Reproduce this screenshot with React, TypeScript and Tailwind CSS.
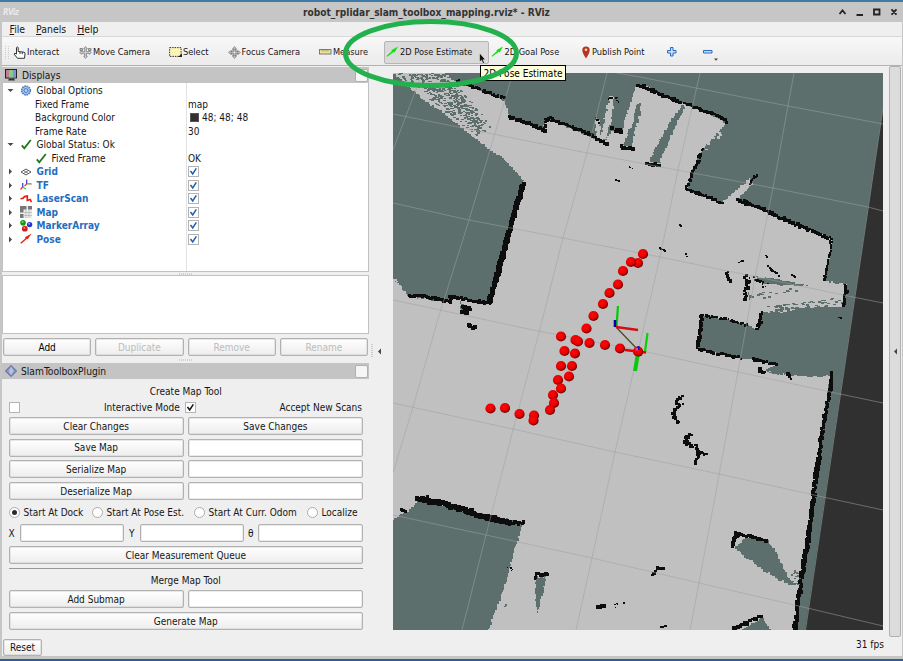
import React from 'react';

type P = [number, number];

/* Seeded generator so that the occupancy map is the same on every render */
function rng(seed: number) {
  let s = seed;
  return () => {
    s = (s * 1664525 + 1013904223) % 4294967296;
    return s / 4294967296;
  };
}

function pts(s: string): P[] {
  return s.split(' ').map((p) => p.split(',').map(Number) as P);
}

/* Blocky outline: steps along each edge in cell sized moves */
function jag(s: string, amp: number, seed: number): string {
  const r = rng(seed);
  const v = pts(s);
  let d = '';
  let first = true;
  v.forEach((a, i) => {
    const b = v[(i + 1) % v.length];
    const n = Math.max(1, Math.round(Math.hypot(b[0] - a[0], b[1] - a[1]) / 2.2));
    for (let k = 0; k < n; k++) {
      const x = (a[0] + ((b[0] - a[0]) * k) / n + (r() - 0.5) * amp).toFixed(1);
      const y = (a[1] + ((b[1] - a[1]) * k) / n + (r() - 0.5) * amp).toFixed(1);
      d += first ? `M${x} ${y}` : `H${x}V${y}`;
      first = false;
    }
  });
  return d + 'Z';
}

function wall(s: string, w: number, amp: number, seed: number): string {
  const r = rng(seed);
  const v = pts(s);
  let d = '';
  for (let i = 0; i < v.length - 1; i++) {
    const [a, b] = [v[i], v[i + 1]];
    const n = Math.max(1, Math.round(Math.hypot(b[0] - a[0], b[1] - a[1]) / 1.5));
    for (let k = 0; k <= n; k++) {
      const q = w * (0.8 + r() * 0.4);
      const x = a[0] + ((b[0] - a[0]) * k) / n + (r() - 0.5) * amp - q / 2;
      const y = a[1] + ((b[1] - a[1]) * k) / n + (r() - 0.5) * amp - q / 2;
      d += `M${x.toFixed(1)} ${y.toFixed(1)}h${q.toFixed(1)}v${q.toFixed(1)}h-${q.toFixed(1)}z`;
    }
  }
  return d;
}

/* Short dashes scattered in a quadrilateral a-b-c-d */
function scatter(a: P, b: P, c: P, d: P, n: number, seed: number, w = 2.4, fade = 1): string {
  const r = rng(seed);
  let out = '';
  for (let i = 0; i < n; i++) {
    const u = r();
    const t = Math.pow(r(), fade);
    const x = (a[0] * (1 - u) + b[0] * u) * (1 - t) + (d[0] * (1 - u) + c[0] * u) * t;
    const y = (a[1] * (1 - u) + b[1] * u) * (1 - t) + (d[1] * (1 - u) + c[1] * u) * t;
    out += `M${x.toFixed(1)} ${y.toFixed(1)}h${w}v1.3h-${w}z`;
  }
  return out;
}

const FREE =
  '390,70 423,100 443,113 467,133 490,150 510,165 523,182 490,303 450,297 450,302 410,297 393,278 388,274 388,521 393,519 410,509 418,500 523,523 513,557 500,600 489,630 487,636 797,636 797,630 800,587 807,537 815,487 822,437 830,376 812,377 790,375 775,372 760,372 777,364 753,360 740,357 698,349 702,315 725,319 747,325 758,331 762,312 783,312 807,307 843,307 847,284 825,281 832,238 737,199 753,183 750,179 722,203 686,189 693,167 702,150 725,123 720,118 683,103 643,85 637,85 625,120 622,132 612,131 605,142 593,138 553,120 546,119 543,131 510,117 505,100 473,87 457,82 445,73 443,70';

const WALLS: [string, number, number][] = [
  ['523,184 517,204 510,228 502,257 496,280 489,302', 4.6, 1.6],
  ['489,303 474,301 461,298 451,297 450,302 436,299 423,296 409,296', 3, 2],
  ['458,81 472,87 488,92 503,98', 2.6, 2.6],
  ['510,117 522,121 534,126 544,131 546,120 552,118', 3.2, 2.4],
  ['552,120 564,124 580,130 596,137', 2.8, 1.8],
  ['597,139 607,144', 3.2, 2],
  ['612,129 622,132', 3.6, 3],
  ['621,147 632,149', 3.6, 2],
  ['637,85 645,87 660,94 675,100 681,103', 3, 2],
  ['684,103 700,109 713,114 722,118 726,123', 2.8, 2.2],
  ['702,150 698,160 693,170 690,180 686,189', 2.6, 2.6],
  ['686,189 700,194 712,198 722,203', 2.8, 1.8],
  ['737,199 752,205 770,213 790,222 810,230 828,238', 3, 2.2],
  ['831,238 830,255 826,270 825,280', 2.2, 2],
  ['846,284 846,292 844,300 843,306', 2.8, 2.6],
  ['702,315 701,325 699,338 697,348', 3, 1.8],
  ['697,349 710,352 722,354 731,356 741,358', 2.6, 2.6],
  ['702,315 712,317 725,319 734,322 746,325', 2, 2.6],
  ['762,312 760,322 757,330', 2.8, 2.2],
  ['753,359 764,362 776,364', 2.8, 2],
  ['759,367 761,372 764,372', 2.8, 2],
  ['788,373 790,378', 3, 1.8],
  ['831,373 831,384 829,397 824,420 821,440 819,457', 3.2, 2],
  ['819,457 816,475 814,493 811,515 808,540 804,562 802,578', 3.9, 2.4],
  ['801,580 800,590 797,606 795,631', 3.4, 2.4],
  ['418,499 428,501 444,504 458,508 470,512 489,518 508,522', 4.8, 2.4],
  ['508,523 524,522', 3.4, 2.6],
  ['402,509 406,511', 3.6, 2],
  ['418,500 426,497', 3, 2.5],
  ['537,574 547,575', 3.6, 2],
  ['536,575 535,579', 2.4, 1],
  ['732,547 736,533 748,536 767,541', 3.2, 1.4],
  ['733,540 738,535', 4, 1.5],
  ['733,629 746,623 761,616', 3, 2],
  ['681,396 677,401 678,406 673,414 678,422', 2.8, 2.6],
  ['678,408 682,405', 2, 2],
  ['692,434 687,437 686,443 693,446', 3, 2.4],
  ['696,445 699,452 695,463', 2.8, 2],
  ['699,452 706,454', 2.4, 1.8],
  ['664,568 658,568 653,575', 3, 1.8],
  ['661,627 667,626', 2, 1.5],
  ['597,608 603,606', 3.4, 2.4],
  ['616,602 617,606', 1.4, 3],
  ['623,603 624,603', 1.4, 1],
  ['727,272 727,277 731,282', 2.6, 2],
  ['745,277 748,282 746,290 745,300', 3, 3],
  ['752,277 760,281 767,286', 1.8, 6],
  ['769,266 772,270 778,275', 2, 2.4],
  ['766,256 767,257', 1.6, 1],
  ['792,275 795,277', 1.8, 1],
  ['660,248 665,251', 1.8, 1],
  ['686,255 688,256', 1.8, 2],
  ['739,262 743,261', 1.6, 1],
  ['629,167 632,168', 1.6, 1],
  ['616,180 619,181', 1.8, 0.5],
  ['646,163 659,165', 3.4, 2],
  ['462,307 469,308 464,313 467,314', 3.4, 4],
  ['470,326 474,328', 4.2, 2.6],
  ['509,566 514,570', 1.5, 4],
  ['609,99 612,97', 2, 2],
  ['596,118 600,122', 1.8, 3],
  ['616,97 618,101', 1.6, 2],
  ['750,184 753,178 757,176', 2, 1.6],
  ['680,225 681,226', 1.4, 0.5],
  ['839,318 841,318', 1.8, 1],
];

const GRID = [
  '422,73 417,87 393,150',
  '513,73 490,150 469,220 438,319 413,407 393,473',
  '607,73 587,153 563,238 541,325 513,430 486,535 462,630',
  '700,73 678,170 660,257 643,330 615,452 592,558 576,630',
  '794,73 773,188 755,277 738,372 719,475 699,583 690,630',
  '617,73 640,77 788,106 883,124',
  '393,114 493,134 587,153 677,170 773,188 868,207 883,211',
  '393,203 469,220 563,238 660,257 757,277 853,297 883,303',
  '393,300 440,310 533,330 647,352 738,372 840,394 883,403',
  '393,403 513,429 615,452 719,474 823,497 883,510',
  '393,515 486,535 592,558 699,583 803,607 883,626',
];

const BALLS: P[] = [
  [643, 254], [638, 263], [631, 262], [623, 271], [618, 284.5], [609.5, 293], [603, 304], [593.5, 316], [586.5, 328.5],
  [561, 336.5], [575.5, 340], [578, 341.5], [589.5, 343], [605, 345], [620, 348.5], [638, 351.5],
  [564.5, 351], [575, 353.5], [561, 366], [572, 366], [569, 376.5], [558, 380], [561, 388.5], [553, 395], [554, 403], [550, 410],
  [490.5, 408.5], [505, 408], [519.5, 414], [534, 415.5], [533.5, 420.5],
];

function MapView() {
  return (
    <svg width="490" height="557" viewBox="393 73 490 557" className="block shrink-0">
      <defs>
        <radialGradient id="ball" cx="0.42" cy="0.38" r="0.6">
          <stop offset="0" stopColor="#ff0808" />
          <stop offset="0.65" stopColor="#e60000" />
          <stop offset="1" stopColor="#6a0000" />
        </radialGradient>
      </defs>
      <rect x="393" y="73" width="490" height="557" fill="#303030" />
      <path d="M393 73H883V107L805 630H393Z" fill="#5c6f6c" />
      <path d="M883.5 105L805.5 630" stroke="#7f8a88" strokeWidth="0.8" fill="none" />
      <g shapeRendering="crispEdges">
        <path d={jag(FREE, 1.8, 7)} fill="#c0c0c0" />
        <path d={jag('610,96 614,97 613,110 609,130 606,140 597,138 595,118 601,121 604,117', 2.4, 3)} fill="#c0c0c0" />
        <path d={jag('601,112 604,118 604,128 601,134 600,124', 2, 9)} fill="#5c6f6c" />
        <path d={jag('641,102 637,106 633,122 623,146 632,148 636,125 640,114', 2, 5)} fill="#5c6f6c" />
        <path d={jag('682,104 684,110 675,128 660,163 648,163 660,138 673,117', 2, 6)} fill="#5c6f6c" />
        <path d={jag('734,546 745,538 768,541 780,560 789,578 793,586 775,576 760,567 745,556', 2.4, 8)} fill="#5c6f6c" />
        <path d={jag('733,635 762,617 773,635', 1.4, 8)} fill="#5c6f6c" />
        <path d={jag('536,577 546,577 542,597 538,613 536,605', 1.6, 8)} fill="#5c6f6c" />
        <path d={jag('756,277 775,279 808,286 790,285 765,284', 1.6, 8)} fill="#5c6f6c" />
        <path d={jag('748,293 753,297 749,302', 1.6, 8)} fill="#5c6f6c" />
        <path d={jag('767,372 776,371 776,368 783,375', 1.6, 8)} fill="#5c6f6c" />
        <path d={jag('460,302 467,307 466,312 461,309', 1.6, 8)} fill="#5c6f6c" />
        <path d={scatter([396, 73], [444, 73], [482, 124], [476, 136], 400, 11, 2.4, 1.3)} fill="#5c6f6c" />
        <path d={scatter([440, 80], [456, 84], [492, 128], [482, 134], 60, 13, 2)} fill="#5c6f6c" />
        <path d={scatter([765, 306], [843, 296], [843, 308], [770, 312], 75, 17, 3)} fill="#5c6f6c" />
        <path d={scatter([755, 293], [790, 288], [800, 290], [758, 299], 16, 18, 3)} fill="#5c6f6c" />
        <path d={scatter([393, 276], [399, 285], [407, 296], [393, 285], 22, 21, 2)} fill="#c0c0c0" />
        <path d={scatter([790, 568], [799, 573], [801, 584], [791, 585], 26, 29, 2)} fill="#5c6f6c" />
        <path d={scatter([705, 128], [726, 126], [712, 144], [702, 150], 14, 30, 3)} fill="#c0c0c0" />
        <path d={scatter([504, 604], [506, 604], [507, 606], [504, 606], 3, 31, 2)} fill="#5c6f6c" />
        {WALLS.map(([s, w, a], i) => (
          <path key={i} d={wall(s, w, a, 40 + i)} fill="#0d0d0d" />
        ))}
      </g>
      <g fill="none" stroke="#a0a0a0" strokeOpacity="0.6" strokeWidth="0.9">
        {GRID.map((g) => (
          <polyline key={g} points={g} />
        ))}
      </g>
      <path d="M616 327L639 351" stroke="#4a4420" strokeWidth="1.2" />
      <path d="M616.5 326L618 306" stroke="#0c0" strokeWidth="2.2" />
      <path d="M615 327V320" stroke="#00a" strokeWidth="2.6" />
      <path d="M616 327L638 330" stroke="#d01010" strokeWidth="2.4" />
      <path d="M645 352L647.5 333" stroke="#0ad00a" strokeWidth="2.2" />
      {BALLS.map(([x, y], i) => (
        <circle key={i} cx={x} cy={y} r="5.1" fill="url(#ball)" />
      ))}
      <path d="M625 350L646 352.5" stroke="#f00000" strokeWidth="2.4" />
      <path d="M637.5 356L635 371" stroke="#0ac80a" strokeWidth="4" />
      <circle cx="638.5" cy="352" r="4.6" fill="url(#ball)" />
      <path d="M638.5 350V346" stroke="#1010c0" strokeWidth="2" />
      <rect x="635.5" y="348" width="2.5" height="2.5" fill="#d050a0" />
    </svg>
  );
}

function ToolButton({ w, label, icon, pad = '' }: { w: string; label: string; icon: React.ReactNode; pad?: string }) {
  return (
    <div className={`flex h-6 shrink-0 items-center ${w} ${pad}`}>
      {icon}
      <span>{label}</span>
    </div>
  );
}

function Arrow({ c }: { c: string }) {
  return (
    <svg width="13" height="12" viewBox="0 0 13 12" className="shrink-0">
      <path d="M0.500 10L6 5L5.300 4.200L12 0.500L8.600 6.600L7.600 6L1.200 10.700Z" fill={c} />
    </svg>
  );
}

function MoveIcon({ focus = false }: { focus?: boolean }) {
  return (
    <svg width="13" height="13" viewBox="0 0 13 13" className="shrink-0" fill="#ddd" stroke="#777" strokeWidth="0.8">
      <path d="M6.500 0.600L8.300 2.800H7.300V5.700H10.200V4.700L12.400 6.500L10.200 8.300V7.300H7.300V10.200H8.300L6.500 12.400L4.700 10.200H5.700V7.300H2.800V8.300L0.600 6.500L2.800 4.700V5.700H5.700V2.800H4.700Z" />
      {focus ? <circle cx="6.500" cy="6.500" r="3.300" fill="none" /> : <path d="M1 2.500h2.500v2H1zM9.500 2.500h2.500v2H9.500z" fill="#bbb" />}
    </svg>
  );
}

function Caret({ open }: { open?: boolean }) {
  return (
    <svg width="7" height="7" viewBox="0 0 7 7" className="shrink-0">
      <path d={open ? 'M0.500 2H6.500L3.500 5Z' : 'M2 0.500L5 3.500L2 6.500Z'} fill="#4a4a4a" />
    </svg>
  );
}

function CheckMark() {
  return (
    <svg width="11" height="11" viewBox="0 0 11 11" className="shrink-0">
      <path d="M0.800 6.300L3.300 9.300L9.800 1" stroke="#1a7a1a" strokeWidth="1.800" fill="none" />
    </svg>
  );
}

function Box({ checked, c = '#111' }: { checked?: boolean; c?: string }) {
  return (
    <span className="flex size-[11px] shrink-0 items-center justify-center border border-[#b4b4b4] bg-white">
      {checked && (
        <svg width="9" height="9" viewBox="0 0 9 9">
          <path d="M1.500 4L3.700 7L7.300 1.300" stroke={c} strokeWidth="1.500" fill="none" />
        </svg>
      )}
    </span>
  );
}

const icons: Record<string, React.ReactNode> = {
  gear: (
    <svg width="12" height="12" viewBox="0 0 12 12">
      <circle cx="6" cy="5.500" r="4.400" fill="#a9c6ec" stroke="#4a7dc0" strokeWidth="1.500" strokeDasharray="1.700 0.600" />
      <path d="M6 2v7M2.500 5.500h7M3.500 3l5 5M8.500 3l-5 5" stroke="#6f9bd6" strokeWidth="0.600" />
      <circle cx="6" cy="5.500" r="1.800" fill="#c4d8f2" stroke="#3a6fb5" strokeWidth="0.800" />
    </svg>
  ),
  Grid: (
    <svg width="12" height="12" viewBox="0 0 12 12" fill="none" stroke="#4a4a4a" strokeWidth="0.900">
      <path d="M1 6L6 3L11 6L6 9Z" />
      <path d="M3.500 4.500L8.500 7.500M8.500 4.500L3.500 7.500" strokeWidth="0.700" />
    </svg>
  ),
  TF: (
    <svg width="12" height="12" viewBox="0 0 12 12" fill="none" strokeWidth="1.200">
      <path d="M2.700 8V4M6.700 5V0.500" stroke="#33d" />
      <path d="M2.700 8L6 10M6.700 5L11.500 4.600" stroke="#2d2" />
      <path d="M2.700 8L0.500 10.500M6.700 5L4.500 7" stroke="#e33" />
      <path d="M7.500 4.500L11.500 5.500" stroke="#e66" strokeWidth="0.700" />
    </svg>
  ),
  LaserScan: (
    <svg width="12" height="12" viewBox="0 0 12 12" fill="none" stroke="#ee1414" strokeWidth="1.600">
      <path d="M0.500 5.800L3 5.300L4.500 3.600L7.300 3V7.500L10.300 6.500L11.500 9.300" />
    </svg>
  ),
  Map: (
    <svg width="12" height="12" viewBox="0 0 12 12">
      <rect width="12" height="12" fill="#ececec" />
      <path d="M0 0H6.500V3.500H3.500V6.500H0ZM8 0h4v3.500H8zM0 8h3.500v4H0z" fill="#777" />
      <path d="M6 4v8M9 4v8M4 6.500h8M4 9.500h8" stroke="#aaa" strokeWidth="0.600" />
    </svg>
  ),
  MarkerArray: (
    <svg width="13" height="12" viewBox="0 0 13 12">
      <circle cx="3" cy="2.800" r="2.800" fill="#149614" />
      <circle cx="9.600" cy="4.600" r="2.700" fill="#2335c8" />
      <circle cx="4.800" cy="8.700" r="2.900" fill="#c82020" />
      <circle cx="2.600" cy="2" r="1" fill="#6fe06f" />
      <circle cx="9.200" cy="3.800" r="1" fill="#99f" />
      <circle cx="4.400" cy="7.800" r="1" fill="#f88" />
    </svg>
  ),
  Pose: (
    <svg width="12" height="12" viewBox="0 0 12 12">
      <path d="M0.300 9.800L5.500 5.300L5 4.300L11.600 0.600L7.800 6.200L7 5.800L1.200 10.800Z" fill="#e8200f" />
    </svg>
  ),
};

function OptionRow({ label, children }: { label: string; children: React.ReactNode }) {
  return (
    <div className="flex h-[13.5px] items-center">
      <span className="w-[153px]">{label}</span>
      <span className="flex items-center">{children}</span>
    </div>
  );
}

function DisplayRow({ name }: { name: string }) {
  return (
    <div className="flex h-[13.5px] items-center">
      <span className="w-[13px]">
        <Caret />
      </span>
      <span className="flex w-[16.5px] items-center">{icons[name]}</span>
      <span className="w-[151.5px] font-bold text-[#1f6ebf]">{name}</span>
      <Box checked c="#1f5fae" />
    </div>
  );
}

const btn =
  'flex items-center justify-center rounded-[2px] border border-[#b2b2b2] bg-gradient-to-b from-[#ffffff] to-[#ededed] shadow-[inset_0_0_0_0.5px_#d0d0d0]';
const field = 'rounded-[2px] border border-[#b2b2b2] bg-white shadow-[inset_0_0_0_0.5px_#d8d8d8]';

function Dots() {
  return <div className="h-[2px] w-[13px] border-y border-dotted border-[#d0d0d0]" />;
}

function Radio({ label, on, w }: { label: string; on?: boolean; w: string }) {
  return (
    <div className={`flex items-center gap-[4px] ${w}`}>
      <span className="flex size-[11px] shrink-0 items-center justify-center rounded-full border border-[#adadad] bg-white">
        {on && <span className="size-[5px] rounded-full bg-[#2b2b2b]" />}
      </span>
      <span>{label}</span>
    </div>
  );
}

export default function App() {
  return (
    <div className="relative flex h-[661px] w-[903px] flex-col overflow-hidden bg-[#c6c6c6] font-['DejaVu_Sans_Condensed','DejaVu_Sans',sans-serif] text-[10px] leading-[13px] whitespace-nowrap text-[#161616] [font-stretch:condensed]">
      <div className="h-[2px] shrink-0 bg-[#3d7ba5]" />
      <header className="flex h-5 shrink-0 items-center">
        <span className="w-[302px] pl-[3px] text-[8px] font-bold tracking-[-0.6px] text-[#e9e9e9] italic">RViz</span>
        <h1 className="w-[536px] pl-px text-[10.1px] font-bold text-[#333]">robot_rplidar_slam_toolbox_mapping.rviz* - RViz</h1>
        <svg width="62" height="10" viewBox="0 0 62 10" fill="none" stroke="#222" strokeWidth="1.800">
          <path d="M1.500 7L4.500 3.500L7.500 7M18.500 8H25M36 2.500H41.500V7.500H36ZM53.500 2.300L58.500 7.700M58.500 2.300L53.500 7.700" />
        </svg>
      </header>

      <div className="mx-[2px] mr-px flex min-h-0 grow flex-col bg-[#efefef]">
        <nav className="flex h-[14px] shrink-0 items-center gap-[11px] pl-[7.5px] text-[10.4px]">
          <span><u>F</u>ile</span>
          <span><u>P</u>anels</span>
          <span><u>H</u>elp</span>
        </nav>
        <div className="flex h-[30px] shrink-0 items-center border-y border-t-[#d8d8d8] border-b-[#b2b2b2] bg-gradient-to-b from-[#f8f8f8] to-[#ebebeb] pt-[2px] pl-[3px] font-['DejaVu_Sans',sans-serif] text-[8.25px] [font-stretch:normal]">
          <div className="mr-[4px] h-[13px] w-[4px] border-x border-dotted border-[#ccc]" />
          <ToolButton w="w-[66px]" label="Interact" pad="gap-px" icon={
            <svg width="13" height="13" viewBox="0 0 13 13" className="shrink-0" fill="#fff" stroke="#333" strokeWidth="1">
              <path d="M3.500 8V1.500Q4.300 0.300 5.200 1.500V5.500L11 6.200Q12.200 6.500 12 8L11.500 12.300H4.500L1 8Q1.500 6.500 3.500 8M7 6v2M9.300 6.200v2" />
            </svg>} />
          <ToolButton w="w-[90px]" label="Move Camera" pad="gap-px" icon={<MoveIcon />} />
          <ToolButton w="w-[58.5px]" label="Select" icon={
            <svg width="13" height="12" viewBox="0 0 13 12" className="mr-px shrink-0">
              <rect x="0.600" y="1.600" width="11.500" height="8.800" fill="#fbf4b4" stroke="#333" strokeDasharray="1.500 1" />
              <path d="M9 11h4V7.500z" fill="#222" />
            </svg>} />
          <ToolButton w="w-[91.5px]" label="Focus Camera" icon={<MoveIcon focus />} pad="gap-px" />
          <ToolButton w="w-[65px]" label="Measure" icon={
            <svg width="13" height="6" viewBox="0 0 13 6" className="mr-px shrink-0">
              <rect x="0.500" y="0.500" width="11.500" height="4.500" fill="#eee39a" stroke="#777" />
              <path d="M3 0.500v2M5 0.500v2M7 0.500v2M9 0.500v2" stroke="#777" strokeWidth="0.700" />
            </svg>} />
          <div className="flex h-[23px] w-[105px] shrink-0 items-center rounded-[2px] border border-[#b5b5b5] bg-[#dadada] pl-[1px]">
            <Arrow c="#12e012" />
            <span className="pl-[1px]">2D Pose Estimate</span>
          </div>
          <ToolButton w="w-[92px]" label="2D Goal Pose" icon={<Arrow c="#12e012" />} pad="pl-[2px] gap-[0.5px]" />
          <ToolButton w="w-[86px]" label="Publish Point" icon={
            <svg width="11" height="13" viewBox="0 0 11 13" className="shrink-0">
              <path d="M5 12.500Q1.300 7 1.300 4A3.700 3.600 0 0 1 8.700 4Q8.700 7 5 12.500Z" fill="#b8341c" />
              <circle cx="5" cy="3.800" r="1.300" fill="#f7d9cf" />
            </svg>} />
          <svg width="52" height="20" viewBox="0 0 52 20" className="shrink-0">
            <path d="M3.500 5.500h2.500v3h3v2.500H6v3H3.500v-3h-3V8.500h3z" fill="#c8def8" stroke="#2a6ac0" />
            <path d="M36.500 8.500h8.500v2.500h-8.500z" fill="#c8def8" stroke="#2a6ac0" />
            <path d="M47 16.500h4l-2 2.200z" fill="#444" />
          </svg>
        </div>

        <div className="flex min-h-0 grow">
          <main className="flex min-h-0 w-[367px] flex-col pt-px">
            <div className="flex h-4 shrink-0 items-center bg-[#c4c4c4] pl-[3px]">
              <svg width="13" height="12" viewBox="0 0 13 12" className="mr-[4px]">
                <rect x="0.500" y="0.500" width="11" height="8.500" fill="#c47f8c" stroke="#222" />
                <rect x="4" y="1" width="4" height="7.500" fill="#7fce8c" />
                <rect x="8" y="1" width="3" height="7.500" fill="#8791d4" />
                <path d="M4 9.500h5l1 2H3z" fill="#333" />
              </svg>
              <span className="text-[10.2px]">Displays</span>
              <span className="mr-px ml-auto size-[13px] rounded-[2px] border border-[#b0b0b0] bg-[#f6f6f6]" />
            </div>
            <section className="flex h-[189px] shrink-0 flex-col border-x border-b border-[#c2c2c2] bg-white bg-[linear-gradient(#e2e2e2,#e2e2e2)] bg-[length:1px_100%] bg-[position:183px_0] bg-no-repeat pt-[1px] pl-[4px]">
              <div className="flex h-[13.500px] items-center">
                <span className="w-[13px]"><Caret open /></span>
                <span className="w-[16.500px]">{icons.gear}</span>
                <span>Global Options</span>
              </div>
              <div className="pl-[28px]">
                <OptionRow label="Fixed Frame">map</OptionRow>
                <OptionRow label="Background Color">
                  <span className="mr-[3px] ml-[2px] size-[9px] border border-[#555] bg-[#303030]" />
                  48; 48; 48
                </OptionRow>
                <OptionRow label="Frame Rate">30</OptionRow>
              </div>
              <div className="flex h-[13.500px] items-center">
                <span className="w-[13.500px]"><Caret open /></span>
                <span className="w-[16px]"><CheckMark /></span>
                <span>Global Status: Ok</span>
              </div>
              <div className="flex h-[13.500px] items-center pl-[28.500px]">
                <span className="w-[16px]"><CheckMark /></span>
                <span className="w-[136.500px]">Fixed Frame</span>
                <span>OK</span>
              </div>
              {['Grid', 'TF', 'LaserScan', 'Map', 'MarkerArray', 'Pose'].map((n) => (
                <DisplayRow key={n} name={n} />
              ))}
            </section>
            <div className="flex h-[3px] shrink-0 items-center justify-center"><Dots /></div>
            <section className="h-[59px] shrink-0 border border-[#c2c2c2] bg-white" />
            <div className="mt-[4px] flex h-[18px] shrink-0 gap-[4px] pr-px pl-px">
              <button className={`${btn} flex-1 text-black`}>Add</button>
              {['Duplicate', 'Remove', 'Rename'].map((n) => (
                <button key={n} className={`${btn} flex-1 text-[#bcbcbc]`}>{n}</button>
              ))}
            </div>
            <div className="flex h-[7px] shrink-0 items-center justify-center"><Dots /></div>
            <div className="flex h-4 shrink-0 items-center bg-[#c4c4c4] pl-[3px]">
              <svg width="12" height="12" viewBox="0 0 12 12" className="mr-[4px]">
                <path d="M6 0.500L11.500 6L6 11.500L0.500 6Z" fill="#8c9cc9" stroke="#33447c" strokeWidth="0.800" />
                <path d="M6 1.500L8.500 6L6 10.500L4 6Z" fill="#b7c3e2" />
              </svg>
              <span className="text-[10.2px]">SlamToolboxPlugin</span>
              <span className="mr-px ml-auto size-[13px] rounded-[2px] border border-[#b0b0b0] bg-[#f6f6f6]" />
            </div>
            <section className="flex flex-col pt-[6px] pr-[6px] pl-[6.5px]">
              <div className="text-center">Create Map Tool</div>
              <div className="grid h-[19px] grid-cols-2 items-center gap-x-[4px]">
                <span className="flex items-center justify-between pr-[4px]"><Box /> Interactive Mode</span>
                <span className="-ml-[3px] flex items-center justify-between pr-px"><Box checked /> Accept New Scans</span>
              </div>
              <div className="grid grid-cols-2 gap-x-[4px] gap-y-[3.700px] [grid-auto-rows:18px]">
                <button className={btn}>Clear Changes</button>
                <button className={btn}>Save Changes</button>
                <button className={btn}>Save Map</button>
                <div className={field} />
                <button className={btn}>Serialize Map</button>
                <div className={field} />
                <button className={btn}>Deserialize Map</button>
                <div className={field} />
              </div>
              <div className="flex h-[24px] items-center">
                <Radio label="Start At Dock" on w="w-[83px]" />
                <Radio label="Start At Pose Est." w="w-[102px]" />
                <Radio label="Start At Curr. Odom" w="w-[113px]" />
                <Radio label="Localize" w="" />
              </div>
              <div className="flex h-[18px] items-center">
                <span className="w-[11.500px]">X</span>
                <div className={`${field} h-[18px] w-[104px]`} />
                <span className="w-[16px] pl-[5px]">Y</span>
                <div className={`${field} h-[18px] w-[104px]`} />
                <span className="w-[14px] pl-[4px]">θ</span>
                <div className={`${field} h-[18px] grow`} />
              </div>
              <button className={`${btn} mt-[4px] h-[18px]`}>Clear Measurement Queue</button>
              <div className="mt-[4px] h-px bg-[#9a9a9a]" />
              <div className="mt-[5px] text-center">Merge Map Tool</div>
              <div className="mt-[3px] grid grid-cols-2 gap-x-[4px] gap-y-[4px] [grid-auto-rows:18px]">
                <button className={btn}>Add Submap</button>
                <div className={field} />
                <button className={`${btn} col-span-2`}>Generate Map</button>
              </div>
            </section>
            <button className={`${btn} mt-auto ml-px h-[17px] w-[39px] shrink-0`}>Reset</button>
          </main>

          <div className="flex w-[24px] shrink-0 items-center gap-[4px] pl-[2px]">
            <div className="-mt-[21px] h-[13px] w-[2px] border-x border-dotted border-[#ccc]" />
            <svg width="5" height="7" viewBox="0 0 5 7" className="-mt-[20px]"><path d="M4 0.500V6.500L1 3.500Z" fill="#444" /></svg>
          </div>

          <div className="flex grow flex-col pt-[7px]">
            <MapView />
            <div className="flex h-[26px] items-center pt-[3px] pl-[463px]">31 fps</div>
          </div>
          <aside className="mr-px flex h-[571px] w-[12px] shrink-0 items-center justify-center rounded-[2px] border border-[#b0b0b0] bg-[#dcdcdc]">
            <svg width="5" height="7" viewBox="0 0 5 7"><path d="M4 0.500V6.500L1 3.500Z" fill="#444" /></svg>
          </aside>
        </div>
      </div>
      <div className="h-[3px] shrink-0 bg-[#c6c6c6]" />
      <div className="h-[2px] shrink-0 bg-[#315d97]" />

      <div className="absolute top-[65px] left-[480px] flex h-[16px] w-[86px] items-center justify-center border border-black bg-[#ffffdc] text-black">2D Pose Estimate</div>
      <svg className="absolute top-0 left-[330px]" width="200" height="100" viewBox="330 0 200 100">
        <ellipse cx="431" cy="53.500" rx="85.500" ry="32" fill="none" stroke="#22b14c" strokeWidth="5" />
        <path d="M479.500 53v9l2-1.800 1.500 3.300 1.500-.7-1.500-3.100h2.500z" fill="#111" stroke="#fff" strokeWidth="0.500" />
      </svg>
    </div>
  );
}
